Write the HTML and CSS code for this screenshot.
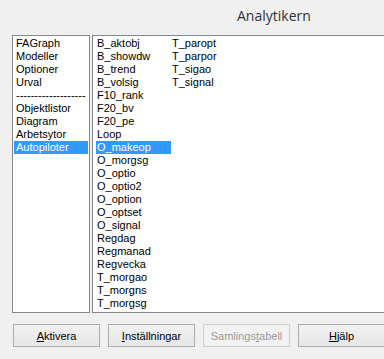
FILE: index.html
```html
<!DOCTYPE html>
<html lang="sv">
<head>
    <meta charset="UTF-8">
    <title>Analytikern</title>
    <link rel="stylesheet" href="styles.css">
</head>
<body>
    <div class="window">
        <header class="titlebar">
            <h1>Analytikern</h1>
        </header>
        <main class="lists">
            <ul class="list groups">
                <li>FAGraph</li>
                <li>Modeller</li>
                <li>Optioner</li>
                <li>Urval</li>
                <li class="sep">-------------------</li>
                <li>Objektlistor</li>
                <li>Diagram</li>
                <li>Arbetsytor</li>
                <li class="selected">Autopiloter</li>
            </ul>
            <ul class="list items">
                <li>B_aktobj</li>
                <li>B_showdw</li>
                <li>B_trend</li>
                <li>B_volsig</li>
                <li>F10_rank</li>
                <li>F20_bv</li>
                <li>F20_pe</li>
                <li>Loop</li>
                <li class="selected">O_makeop</li>
                <li>O_morgsg</li>
                <li>O_optio</li>
                <li>O_optio2</li>
                <li>O_option</li>
                <li>O_optset</li>
                <li>O_signal</li>
                <li>Regdag</li>
                <li>Regmanad</li>
                <li>Regvecka</li>
                <li>T_morgao</li>
                <li>T_morgns</li>
                <li>T_morgsg</li>
                <li>T_paropt</li>
                <li>T_parpor</li>
                <li>T_sigao</li>
                <li>T_signal</li>
            </ul>
        </main>
        <footer class="buttons">
            <button><u>A</u>ktivera</button>
            <button><u>I</u>nställningar</button>
            <button disabled>Samlings<u>t</u>abell</button>
            <button><u>H</u>jälp</button>
        </footer>
    </div>
</body>
</html>
```

FILE: styles.css
```css
html, body {
    margin: 0;
    padding: 0;
    background-color: #f0f0f0;
    overflow: hidden;
}

.window {
    width: 384px;
    height: 359px;
    font-family: "Liberation Sans", Arial, sans-serif;
    font-size: 11px;
    color: #000;
    overflow: hidden;
}

.titlebar {
    height: 35px;
    display: flex;
    align-items: center;
    padding-left: 237px;
    box-sizing: border-box;
}

.titlebar h1 {
    margin: 0;
    font-family: "Open Sans", "Noto Sans", sans-serif;
    font-weight: normal;
    font-size: 14px;
    color: #333;
    padding-bottom: 4px;
}

.lists {
    display: flex;
    gap: 2px;
    padding-left: 12px;
}

.list {
    flex-shrink: 0;
    list-style: none;
    margin: 0;
    height: 278px;
    box-sizing: border-box;
    background: #fff;
    border: 1px solid #828790;
    overflow: hidden;
}

.list li {
    height: 13px;
    line-height: 13px;
    white-space: nowrap;
    overflow: hidden;
}

.groups {
    width: 78px;
    padding: 1px;
}

.groups li {
    padding-left: 2px;
}

.items {
    width: 320px;
    padding: 1px 3px;
    display: grid;
    grid-auto-flow: column;
    grid-template-rows: repeat(21, 13px);
    grid-auto-columns: 75px;
}

.items li {
    padding-left: 1px;
}

.list .selected {
    background: #3399ff;
    color: #fff;
}

.buttons {
    display: flex;
    gap: 8px;
    padding: 11px 0 0 13px;
}

.buttons button {
    flex-shrink: 0;
    width: 87px;
    height: 23px;
    font-family: "Liberation Sans", Arial, sans-serif;
    font-size: 11px;
    color: #000;
    background: linear-gradient(#f2f2f2, #e6e6e6);
    border: 1px solid #acacac;
    border-radius: 0;
    padding: 0;
}

.buttons button:disabled {
    color: #9a9a9a;
    background: #f2f2f2;
    border-color: #cfcfcf;
}
```
